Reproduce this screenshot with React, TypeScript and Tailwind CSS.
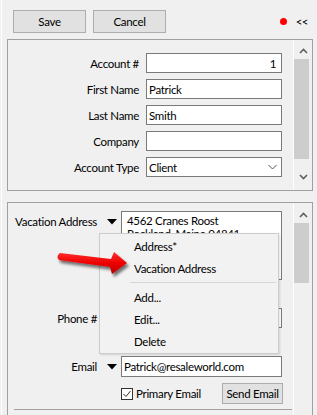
import React from "react";

function ChevronUp() {
  return (
    <svg width="9" height="6" viewBox="0 0 9 6" className="block">
      <polyline points="1,5 4.5,1.5 8,5" fill="none" stroke="#606060" strokeWidth="1.6" />
    </svg>
  );
}

function ChevronDown() {
  return (
    <svg width="9" height="6" viewBox="0 0 9 6" className="block">
      <polyline points="1,1 4.5,4.5 8,1" fill="none" stroke="#606060" strokeWidth="1.6" />
    </svg>
  );
}

function DropTriangle() {
  return (
    <svg width="10" height="6" viewBox="0 0 10 6" className="block">
      <polygon points="0,0 10,0 5,5.5" fill="#000" />
    </svg>
  );
}

function Scrollbar({ thumbTop, thumbHeight, downAtBottom }: { thumbTop: number; thumbHeight: number; downAtBottom?: boolean }) {
  return (
    <div className="w-[19px] shrink-0 border-l border-white flex flex-col">
      <div className="h-[19px] flex justify-center" style={{ paddingTop: thumbTop - 11 }}>
        <ChevronUp />
      </div>
      <div className="w-[15px] bg-[#cdcdcd]" style={{ height: thumbHeight, marginTop: thumbTop - 19 }} />
      <div className="flex-1" />
      {downAtBottom && (
        <div className="h-[19px] flex justify-center items-end pb-[10px]">
          <ChevronDown />
        </div>
      )}
    </div>
  );
}

function Field({ label, value, align = "left", select }: { label: string; value: string; align?: "left" | "right"; select?: boolean }) {
  return (
    <div className="flex items-center h-[20px]">
      <div className="w-[132px] flex justify-end whitespace-nowrap pr-px">{label}</div>
      <div
        className={
          "ml-[6px] w-[136px] h-[20px] bg-white border border-[#7a7a7a] flex items-center px-[2px] " +
          (align === "right" ? "justify-end pr-[5px]" : "")
        }
      >
        <span className="flex-1" style={{ textAlign: align }}>{value}</span>
        {select && (
          <svg width="9" height="6" viewBox="0 0 9 6" className="mr-[2px]">
            <polyline points="0.5,1 4.5,5 8.5,1" fill="none" stroke="#555" strokeWidth="1" />
          </svg>
        )}
      </div>
    </div>
  );
}

function RedArrow() {
  return (
    <svg width="84" height="36" viewBox="0 0 84 36" className="absolute left-[54px] top-[248px]">
      <defs>
        <linearGradient id="ra" x1="0" y1="0" x2="0" y2="1">
          <stop offset="0" stopColor="#ff3030" />
          <stop offset="0.5" stopColor="#ee0000" />
          <stop offset="1" stopColor="#b80000" />
        </linearGradient>
        <filter id="sh" x="-20%" y="-40%" width="140%" height="180%">
          <feDropShadow dx="2" dy="3" stdDeviation="1.6" floodColor="#000" floodOpacity="0.55" />
        </filter>
      </defs>
      <path
        d="M 6 5 L 57 11 L 60 4 L 73 15 L 58 26 L 56 19 L 5 12 Q 1.5 8.5 6 5 Z"
        fill="url(#ra)"
        filter="url(#sh)"
      />
    </svg>
  );
}

function PopupMenu() {
  const item = "h-[22px] flex items-center pl-[34px]";
  return (
    <div className="absolute left-[99px] top-[233px] w-[180px] h-[121px] bg-[#f2f2f2] border border-[#cccccc] pt-[1px] shadow-[1px_1px_2px_rgba(0,0,0,0.12)]">
      <div className={item}>Address*</div>
      <div className={item}>Vacation Address</div>
      <div className="h-[7px] flex items-center pl-[30px] pr-[2px]">
        <div className="h-px w-full bg-[#d7d7d7]" />
      </div>
      <div className={item}>Add...</div>
      <div className={item}>Edit...</div>
      <div className={item}>Delete</div>
    </div>
  );
}

export default function App() {
  return (
    <div className="w-[317px] h-[415px] overflow-hidden bg-[#f0f0f0] relative flex flex-col text-[11.5px] tracking-[-0.3px] leading-[15px] text-black font-['Lato',sans-serif] shadow-[inset_1px_0_0_#f0f0f0,inset_2px_0_0_#ffffff]">
      {/* toolbar */}
      <div className="flex items-center pl-[13px] pt-[10px] h-[33px] shrink-0">
        <button className="w-[73px] h-[23px] border border-[#adadad] bg-[#e1e1e1] flex items-center justify-center">Save</button>
        <button className="ml-[7px] w-[73px] h-[23px] border border-[#adadad] bg-[#e1e1e1] flex items-center justify-center">Cancel</button>
        <div className="ml-auto flex items-center mr-[9px]">
          <div className="w-[7px] h-[7px] rounded-full bg-[#ff0000]" />
          <span className="ml-[9px] tracking-[-0.5px]">&lt;&lt;</span>
        </div>
      </div>

      {/* account panel */}
      <div className="mt-[6px] ml-[7px] w-[306px] h-[152px] shrink-0 border border-[#a0a0a0] flex">
        <div className="flex-1 pt-[13px] flex flex-col gap-[6px]">
          <Field label="Account #" value="1" align="right" />
          <Field label="First Name" value="Patrick" />
          <Field label="Last Name" value="Smith" />
          <Field label="Company" value="" />
          <Field label="Account Type" value="Client" select />
        </div>
        <Scrollbar thumbTop={19} thumbHeight={100} downAtBottom />
      </div>

      {/* contact panel */}
      <div className="mt-[11px] ml-[7px] w-[306px] h-[230px] shrink-0 border border-[#a0a0a0] flex">
        <div className="flex-1 pt-[8px] flex flex-col">
          <div className="flex items-start">
            <div className="w-[89px] flex justify-end whitespace-nowrap pt-[3px]">Vacation Address</div>
            <div className="ml-[10px] pt-[8px]">
              <DropTriangle />
            </div>
            <div className="ml-[4px] w-[161px] h-[69px] bg-white border border-[#7a7a7a] pl-[5px] pt-[2px] leading-[13px]">
              <div>4562 Cranes Roost</div>
              <div>Rockland, Maine 04841</div>
            </div>
          </div>

          <div className="flex items-center mt-[28px]">
            <div className="w-[89px] flex justify-end whitespace-nowrap">Phone #</div>
            <div className="ml-[24px] w-[161px] h-[20px] bg-white border border-[#7a7a7a]" />
          </div>

          <div className="flex items-center mt-[28px]">
            <div className="w-[89px] flex justify-end whitespace-nowrap">Email</div>
            <div className="ml-[10px]">
              <DropTriangle />
            </div>
            <div className="ml-[4px] w-[161px] h-[21px] bg-white border border-[#7a7a7a] flex items-center pl-[2px]">
              Patrick@resaleworld.com
            </div>
          </div>

          <div className="flex items-center mt-[6px] h-[21px]">
            <div className="ml-[113px] w-[12px] h-[12px] bg-white border border-[#333333] flex items-center justify-center">
              <svg width="10" height="10" viewBox="0 0 10 10">
                <polyline points="1.5,5 4,7.5 8.5,2" fill="none" stroke="#333" strokeWidth="1" />
              </svg>
            </div>
            <span className="ml-[3px]">Primary Email</span>
            <button className="ml-auto mr-[10px] w-[61px] h-[21px] border border-[#adadad] bg-[#e1e1e1] flex items-center justify-center">
              Send Email
            </button>
          </div>

          <div className="mt-[5px] ml-[6px] w-[278px] h-px bg-[#a0a0a0]" />
        </div>
        <Scrollbar thumbTop={20} thumbHeight={60} />
      </div>

      <PopupMenu />
      <RedArrow />
    </div>
  );
}
